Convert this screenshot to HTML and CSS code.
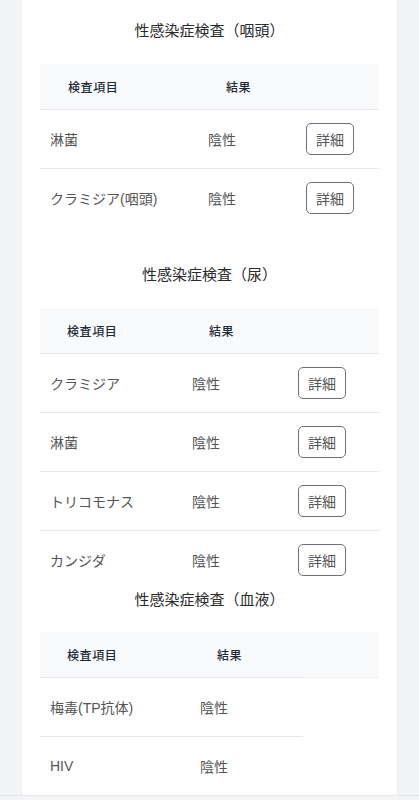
FILE: index.html
```html
<!DOCTYPE html>
<html lang="ja">
<head>
	<meta charset="UTF-8">
	<title>検査結果</title>
	<link rel="stylesheet" href="styles.css">
</head>
<body>
	<div class="card">
		<section class="exam exam-throat">
			<h2 class="exam-title">性感染症検査（咽頭）</h2>
			<table class="result-table t-throat">
				<colgroup><col class="col-item"><col class="col-result"><col class="col-action"></colgroup>
				<thead>
					<tr><th>検査項目</th><th>結果</th><th></th></tr>
				</thead>
				<tbody>
					<tr><td>淋菌</td><td>陰性</td><td><button class="detail-btn">詳細</button></td></tr>
					<tr><td>クラミジア(咽頭)</td><td>陰性</td><td><button class="detail-btn">詳細</button></td></tr>
				</tbody>
			</table>
		</section>
		<section class="exam exam-urine">
			<h2 class="exam-title">性感染症検査（尿）</h2>
			<table class="result-table t-urine">
				<colgroup><col class="col-item"><col class="col-result"><col class="col-action"></colgroup>
				<thead>
					<tr><th>検査項目</th><th>結果</th><th></th></tr>
				</thead>
				<tbody>
					<tr><td>クラミジア</td><td>陰性</td><td><button class="detail-btn">詳細</button></td></tr>
					<tr><td>淋菌</td><td>陰性</td><td><button class="detail-btn">詳細</button></td></tr>
					<tr><td>トリコモナス</td><td>陰性</td><td><button class="detail-btn">詳細</button></td></tr>
					<tr><td>カンジダ</td><td>陰性</td><td><button class="detail-btn">詳細</button></td></tr>
				</tbody>
			</table>
		</section>
		<section class="exam exam-blood">
			<h2 class="exam-title">性感染症検査（血液）</h2>
			<table class="result-table t-blood">
				<colgroup><col class="col-item"><col class="col-result"><col class="col-action"></colgroup>
				<thead>
					<tr><th>検査項目</th><th>結果</th><th class="blank"></th></tr>
				</thead>
				<tbody>
					<tr><td>梅毒(TP抗体)</td><td>陰性</td><td class="blank"></td></tr>
					<tr><td>HIV</td><td>陰性</td><td class="blank"></td></tr>
				</tbody>
			</table>
		</section>
	</div>
	<div class="footer"></div>
</body>
</html>
```

FILE: styles.css
```css
body {
	margin: 0;
	background: #f3f4f6;
	font-family: "Liberation Sans", "Noto Sans CJK JP", sans-serif;
}
.card {
	margin: 0 22px;
	padding: 19px 18px 0;
	background: #fff;
	box-shadow: 0 0 2px rgba(0, 0, 0, 0.08);
}
.exam-throat {
	margin-bottom: 36px;
}
.exam-title {
	margin: 0 0 21px;
	font-size: 15px;
	line-height: 24px;
	font-weight: 400;
	color: #2b2b2b;
	text-align: center;
}
.exam-blood .exam-title {
	margin-top: -1px;
	margin-bottom: 20px;
}
.result-table {
	width: 100%;
	border-collapse: collapse;
	table-layout: fixed;
}
.result-table th {
	height: 45px;
	padding: 0 0 0 27px;
	background: #f9fafb;
	border-bottom: 1px solid #e5e7eb;
	text-align: left;
	font-size: 12px;
	font-weight: 500;
	letter-spacing: 0.05em;
	color: #1f2937;
}
.t-throat th {
	padding-left: 28px;
}
.result-table td {
	height: 58px;
	padding: 0 10px;
	border-bottom: 1px solid #e5e7eb;
	font-size: 14px;
	color: #555;
}
.result-table tr:last-child td {
	border-bottom: none;
}
.result-table th.blank {
	border-bottom-color: #f1f2f4;
}
.result-table td.blank {
	border-bottom: none;
}
.t-throat .col-item { width: 158px; }
.t-throat .col-result { width: 98px; }
.t-urine .col-item { width: 142px; }
.t-urine .col-result { width: 106px; }
.t-blood .col-item { width: 150px; }
.t-blood .col-result { width: 113px; }
.detail-btn {
	width: 48px;
	height: 32px;
	padding: 0;
	border: 1px solid #6b7280;
	border-radius: 5px;
	background: #fff;
	font-family: inherit;
	font-size: 14px;
	color: #555;
	vertical-align: middle;
}
.footer {
	height: 20px;
	border-top: 1px solid #e5e7eb;
	background: #f3f4f6;
}
```
